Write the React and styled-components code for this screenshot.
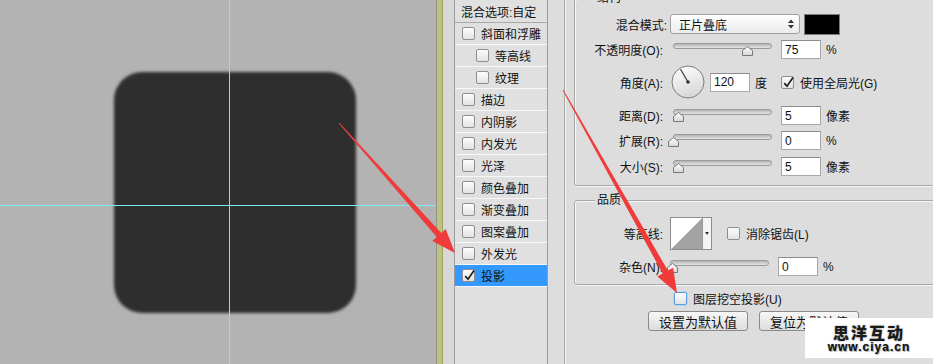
import React from 'react';
import styled, { createGlobalStyle } from 'styled-components';

const GlobalStyle = createGlobalStyle`
  html, body { margin: 0; padding: 0; background: #dddddd; }
  body {
    font-family: "Liberation Sans", "Noto Sans CJK SC", sans-serif;
    font-size: 12px;
    color: #111;
  }
`;

const Screen = styled.div`
  position: relative;
  display: flex;
  width: 933px;
  height: 364px;
  overflow: hidden;
`;

/* ---------- document canvas ---------- */
const Canvas = styled.div`
  position: relative;
  flex: 0 0 437px;
  box-sizing: border-box;
  background: #b3b3b3;
  border-right: 1px solid #8f8f8f;
  padding: 72px 0 0 114px;
`;

const Shape = styled.div`
  width: 242px;
  height: 241px;
  border-radius: 28px;
  background: #2e2e2e;
  filter: blur(1.8px);
`;

const Guide = styled.div`
  position: absolute;
  background: #7ee9ec;
  ${p => (p.$vertical
    ? `top: 0; bottom: 0; left: ${p.$at}px; width: 1px;`
    : `left: 0; right: 0; top: ${p.$at}px; height: 1px;`)}
`;

const Frame = styled.div`
  flex: 0 0 5px;
  background: #bec37c;
  border-right: 1px solid #9da266;
`;

const Gutter = styled.div`
  flex: 0 0 11px;
  background: #d8d8d8;
`;

/* ---------- style list ---------- */
const StyleList = styled.div`
  flex: 0 0 94px;
  box-sizing: border-box;
  background: #e0e0e0;
  border-left: 1px solid #9c9c9c;
  border-right: 1px solid #9c9c9c;
`;

const ListHeader = styled.div`
  display: flex;
  align-items: center;
  height: 22px;
  padding-left: 6px;
  border-bottom: 1px solid #a9a9a9;
  white-space: nowrap;
`;

const ListRow = styled.div`
  display: flex;
  align-items: center;
  gap: 6px;
  height: 21px;
  padding-left: ${p => (p.$indent ? 21 : 7)}px;
  border-bottom: 1px solid #f7f7f7;
  background: ${p => (p.$active ? '#3399ff' : 'transparent')};
  white-space: nowrap;
`;

const Box = styled.span`
  position: relative;
  flex: 0 0 13px;
  width: 13px;
  height: 13px;
  box-sizing: border-box;
  border: 1px solid ${p => (p.$focus ? '#5d9be0' : '#8e8e8e')};
  border-radius: 2px;
  background: linear-gradient(#fdfdfd, #e3e3e3);
  box-shadow: ${p => (p.$focus ? '0 0 0 1px #b4d6f7' : 'none')};
  svg { position: absolute; left: 0; top: -2px; }
`;

function Checkbox({ checked, focus }) {
  return (
    <Box $focus={focus}>
      {checked && (
        <svg width="13" height="14" viewBox="0 0 13 14">
          <path d="M2.2 8.2 L5 11.2 L11 2.6" fill="none" stroke="#1e1e1e" strokeWidth="1.7" />
        </svg>
      )}
    </Box>
  );
}

/* ---------- right panel ---------- */
const Panel = styled.div`
  flex: 1;
  min-width: 0;
  padding-left: 16px;
  background: #dddddd;
`;

const PanelInner = styled.div`
  display: flex;
  flex-direction: column;
  height: 100%;
  padding-left: 9px;
  border-left: 1px solid #a7a7a7;
  box-shadow: inset 1px 0 0 #f5f5f5;
`;

const Group = styled.div`
  position: relative;
  flex-shrink: 0;
  width: 420px;
  box-sizing: border-box;
  margin-top: ${p => p.$mt}px;
  padding: ${p => p.$pt}px 0 ${p => p.$pb}px;
  border: 1px solid #a9a9a9;
  border-radius: 3px;
  box-shadow: inset 1px 1px 0 #f6f6f6, 1px 1px 0 #f6f6f6;
`;

const Legend = styled.span`
  position: absolute;
  top: -8px;
  left: 20px;
  padding: 0 2px;
  line-height: 14px;
  background: #dddddd;
`;

const Row = styled.div`
  display: flex;
  align-items: center;
  height: ${p => p.$h}px;
  margin-top: ${p => p.$mt || 0}px;
  white-space: nowrap;
`;

const Label = styled.span`
  flex: 0 0 ${p => p.$w || 88}px;
  text-align: right;
`;

const Select = styled.div`
  display: flex;
  align-items: center;
  justify-content: space-between;
  width: 130px;
  height: 20px;
  box-sizing: border-box;
  margin-left: 3px;
  padding: 0 5px 0 8px;
  border: 1px solid #a0a0a0;
  border-radius: 3px;
  background: linear-gradient(#ffffff, #ebebeb);
`;

const Swatch = styled.div`
  width: 36px;
  height: 21px;
  box-sizing: border-box;
  margin-left: 4px;
  background: #000;
  border: 1px solid #7c7c7c;
`;

const SliderWrap = styled.div`
  position: relative;
  width: 99px;
  height: 19px;
  margin-left: ${p => p.$ml || 10}px;
`;

const Track = styled.div`
  position: absolute;
  left: 0;
  right: 0;
  top: 3px;
  height: 6px;
  box-sizing: border-box;
  border: 1px solid #9a9a9a;
  border-radius: 3px;
  background: linear-gradient(#b4b4b4, #e4e4e4);
`;

const Thumb = styled.svg`
  position: absolute;
  top: 6px;
  margin-left: -5px;
`;

function Slider({ value, ml }) {
  return (
    <SliderWrap $ml={ml}>
      <Track />
      <Thumb width="11" height="10" viewBox="0 0 11 10" style={{ left: `${value}%` }}>
        <defs>
          <linearGradient id="thumbFill" x1="0" y1="0" x2="0" y2="1">
            <stop offset="0" stopColor="#ffffff" />
            <stop offset="1" stopColor="#d6d6d6" />
          </linearGradient>
        </defs>
        <polygon points="5.5,0.5 10.5,4.5 10.5,9.5 0.5,9.5 0.5,4.5" fill="url(#thumbFill)" stroke="#777" />
      </Thumb>
    </SliderWrap>
  );
}

const Field = styled.div`
  display: flex;
  align-items: center;
  width: 40px;
  height: 19px;
  box-sizing: border-box;
  margin-left: ${p => p.$ml || 9}px;
  padding-left: 3px;
  background: #fff;
  border: 1px solid #a8a8a8;
  border-top-color: #8c8c8c;
`;

const Unit = styled.span`
  margin-left: ${p => p.$ml || 5}px;
`;

const Dial = styled.svg`
  flex: 0 0 34px;
  margin-left: 8px;
`;

const Contour = styled.svg`
  flex: 0 0 42px;
  margin-left: 7px;
`;

const CheckLabel = styled.span`
  display: flex;
  align-items: center;
  gap: 6px;
  margin-left: ${p => p.$ml || 0}px;
`;

const Knockout = styled(Row)`
  padding-left: 100px;
`;

const Buttons = styled.div`
  display: flex;
  gap: 11px;
  margin-top: 6px;
  padding-left: 74px;
`;

const Button = styled.div`
  display: flex;
  align-items: center;
  justify-content: center;
  width: 100px;
  height: 20px;
  box-sizing: border-box;
  border: 1px solid #8a8a8a;
  border-radius: 3px;
  background: linear-gradient(#f7f7f7, #dcdcdc);
  font-size: 13px;
`;

/* ---------- overlays ---------- */
const Annotations = styled.svg`
  position: absolute;
  left: 0;
  top: 0;
  pointer-events: none;
`;

const Watermark = styled.div`
  position: absolute;
  right: 0;
  top: 318px;
  width: 128px;
  height: 40px;
  display: flex;
  flex-direction: column;
  align-items: center;
  justify-content: center;
  background: #fff;
`;

const MarkTitle = styled.span`
  font-family: "Noto Sans CJK SC", sans-serif;
  font-size: 16px;
  font-weight: 900;
  letter-spacing: 2px;
  line-height: 18px;
  color: #1a1a1a;
  text-shadow: 0 0 2px #9a9a9a;
`;

const MarkUrl = styled.span`
  font-family: "Liberation Sans", sans-serif;
  font-size: 12px;
  font-weight: 700;
  letter-spacing: 1px;
  line-height: 13px;
  color: #111;
  text-shadow: 0 0 1px #888, 1px 1px 1px #aaa;
`;

function arrowPoints(x1, y1, x2, y2, headLen = 24, headW = 18, shaftW = 6) {
  const dx = x2 - x1;
  const dy = y2 - y1;
  const len = Math.hypot(dx, dy);
  const ux = dx / len;
  const uy = dy / len;
  const nx = -uy;
  const ny = ux;
  const bx = x2 - ux * headLen;
  const by = y2 - uy * headLen;
  const pts = [
    [x1 + nx * 0.5, y1 + ny * 0.5],
    [bx + nx * shaftW / 2, by + ny * shaftW / 2],
    [bx + nx * headW / 2, by + ny * headW / 2],
    [x2, y2],
    [bx - nx * headW / 2, by - ny * headW / 2],
    [bx - nx * shaftW / 2, by - ny * shaftW / 2],
    [x1 - nx * 0.5, y1 - ny * 0.5],
  ];
  return pts.map(p => p.map(v => v.toFixed(1)).join(',')).join(' ');
}

const styles = [
  { name: '斜面和浮雕' },
  { name: '等高线', indent: true },
  { name: '纹理', indent: true },
  { name: '描边' },
  { name: '内阴影' },
  { name: '内发光' },
  { name: '光泽' },
  { name: '颜色叠加' },
  { name: '渐变叠加' },
  { name: '图案叠加' },
  { name: '外发光' },
  { name: '投影', checked: true, active: true },
];

const sliders = [
  { label: '距离(D):', value: 5, unit: '像素', pos: 5 },
  { label: '扩展(R):', value: 0, unit: '%', pos: 0 },
  { label: '大小(S):', value: 5, unit: '像素', pos: 5 },
];

export default function App() {
  return (
    <Screen>
      <GlobalStyle />

      <Canvas>
        <Shape />
        <Guide $vertical $at={229} />
        <Guide $at={205} />
      </Canvas>
      <Frame />
      <Gutter />

      <StyleList>
        <ListHeader>混合选项:自定</ListHeader>
        {styles.map(s => (
          <ListRow key={s.name} $indent={s.indent} $active={s.active}>
            <Checkbox checked={s.checked} />
            {s.name}
          </ListRow>
        ))}
      </StyleList>

      <Panel>
        <PanelInner>
          <Group $mt={-2} $pt={15} $pb={9}>
            <Legend>结构</Legend>
            <Row $h={20}>
              <Label $w={92}>混合模式:</Label>
              <Select>
                正片叠底
                <svg width="6" height="10" viewBox="0 0 6 10">
                  <path d="M0 4 L3 0.5 L6 4 Z M0 6 L3 9.5 L6 6 Z" fill="#333" />
                </svg>
              </Select>
              <Swatch />
            </Row>
            <Row $h={19} $mt={6}>
              <Label>不透明度(O):</Label>
              <Slider value={75} />
              <Field>75</Field>
              <Unit>%</Unit>
            </Row>
            <Row $h={34} $mt={6}>
              <Label>角度(A):</Label>
              <Dial width="34" height="34" viewBox="0 0 34 34">
                <defs>
                  <linearGradient id="dialFill" x1="0" y1="0" x2="0.3" y2="1">
                    <stop offset="0" stopColor="#ffffff" />
                    <stop offset="1" stopColor="#d9d9d9" />
                  </linearGradient>
                </defs>
                <circle cx="17" cy="17" r="16" fill="url(#dialFill)" stroke="#7c7c7c" />
                <line x1="17" y1="17" x2="9.5" y2="4.3" stroke="#3a3a3a" strokeWidth="1.2" />
                <circle cx="17" cy="17" r="1.8" fill="#333" />
              </Dial>
              <Field $ml={5}>120</Field>
              <Unit>度</Unit>
              <CheckLabel $ml={14}>
                <Checkbox checked />
                使用全局光(G)
              </CheckLabel>
            </Row>
            {sliders.map((s, i) => (
              <Row key={s.label} $h={19} $mt={i === 1 ? 6 : 7}>
                <Label>{s.label}</Label>
                <Slider value={s.pos} />
                <Field>{s.value}</Field>
                <Unit>{s.unit}</Unit>
              </Row>
            ))}
          </Group>

          <Group $mt={14} $pt={16} $pb={8}>
            <Legend>品质</Legend>
            <Row $h={33}>
              <Label>等高线:</Label>
              <Contour width="42" height="33" viewBox="0 0 42 33">
                <rect x="0.5" y="0.5" width="41" height="32" fill="#f4f4f4" stroke="#8e8e8e" />
                <polygon points="1,32 32,1 32,32" fill="#a3a3a3" />
                <polygon points="1,1 32,1 1,32" fill="#ffffff" />
                <line x1="32.5" y1="1" x2="32.5" y2="32" stroke="#9a9a9a" />
                <path d="M35 15 L39 15 L37 18 Z" fill="#333" />
              </Contour>
              <CheckLabel $ml={15}>
                <Checkbox />
                消除锯齿(L)
              </CheckLabel>
            </Row>
            <Row $h={19} $mt={7}>
              <Label>杂色(N):</Label>
              <Slider value={2} ml={7} />
              <Field $ml={9}>0</Field>
              <Unit>%</Unit>
            </Row>
          </Group>

          <Knockout $h={14} $mt={6}>
            <CheckLabel>
              <Checkbox focus />
              图层挖空投影(U)
            </CheckLabel>
          </Knockout>

          <Buttons>
            <Button>设置为默认值</Button>
            <Button>复位为默认值</Button>
          </Buttons>
        </PanelInner>
      </Panel>

      <Annotations width="933" height="364" viewBox="0 0 933 364">
        <polygon points={arrowPoints(339, 123, 455, 253)} fill="#f03b3b" />
        <polygon points={arrowPoints(563, 90, 677, 293)} fill="#f03b3b" />
      </Annotations>

      <Watermark>
        <MarkTitle>思洋互动</MarkTitle>
        <MarkUrl>www.ciya.cn</MarkUrl>
      </Watermark>
    </Screen>
  );
}
